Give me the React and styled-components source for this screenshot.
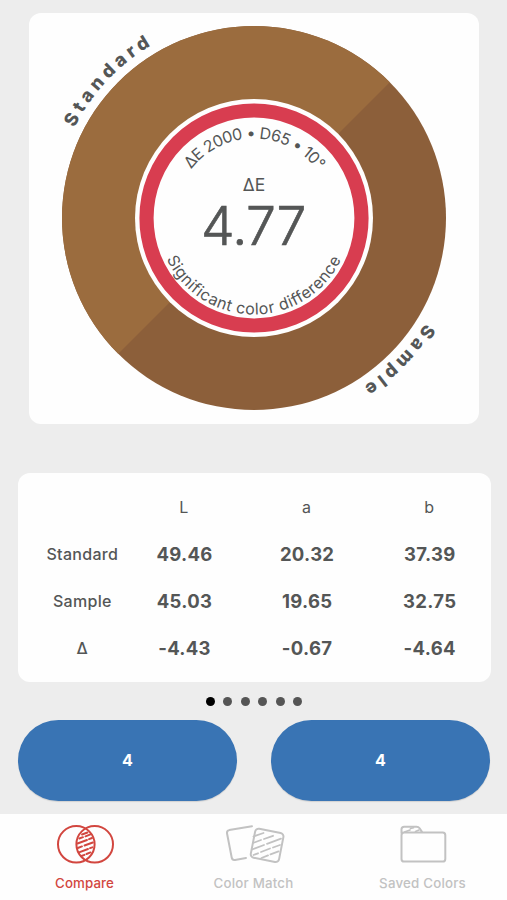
import React, { useState } from "react";
import styled, { createGlobalStyle, css } from "styled-components";

const GlobalStyle = createGlobalStyle`
  * {
    box-sizing: border-box;
  }
  body {
    margin: 0;
    background: #ededed;
    font-family: Inter, "Liberation Sans", sans-serif;
    color: #545656;
  }
`;

const Screen = styled.div`
  display: flex;
  flex-direction: column;
  width: 507px;
  height: 900px;
  background: #ededed;
  overflow: hidden;
`;

const WheelCard = styled.section`
  width: 450px;
  height: 411px;
  margin: 13px 0 0 29px;
  border-radius: 12px;
  background: #fefefe;
`;

const Wheel = styled.svg`
  display: block;
`;

const WheelText = styled.text`
  fill: #545656;
  font-size: ${(props) => props.$size}px;
  font-weight: ${(props) => props.$weight || 400};
  letter-spacing: ${(props) => props.$spacing || 0}px;
  text-anchor: middle;
`;

const BigNumber = styled(WheelText)`
  stroke: #545656;
  stroke-width: 0.7px;
`;

const TableCard = styled.section`
  display: grid;
  grid-template-columns: 1fr repeat(3, 122.6px);
  grid-auto-rows: 47.1px;
  align-items: center;
  justify-items: center;
  width: 473px;
  height: 209.5px;
  margin: 48.5px 0 0 17.5px;
  padding: 10.5px 0 0 24.5px;
  border-radius: 12px;
  background: #fefefe;
`;

const Label = styled.span`
  font-size: 16px;
  font-weight: ${(props) => (props.$light ? 400 : 500)};
  letter-spacing: 0.3px;
`;

const Value = styled.span`
  font-size: 18.5px;
  font-weight: 700;
  letter-spacing: 0.3px;
  margin-left: 1px;
`;

const Dots = styled.div`
  display: flex;
  justify-content: center;
  gap: 8.4px;
  margin: 14.5px 0 0 1px;
`;

const Dot = styled.span`
  width: 9px;
  height: 9px;
  border-radius: 50%;
  background: ${(props) => (props.$active ? "#000000" : "#555555")};
`;

const Buttons = styled.div`
  display: flex;
  gap: 34px;
  margin: 14.5px 17px 0 18px;
`;

const PillButton = styled.button`
  flex: 1;
  height: 80.5px;
  padding: 0;
  border: none;
  border-radius: 41px;
  background: #3974b4;
  box-shadow: 0 1px 1px rgba(0, 0, 0, 0.12);
  color: #ffffff;
  font-family: inherit;
  font-size: 16px;
  font-weight: 700;
`;

const TabBar = styled.nav`
  display: flex;
  height: 86px;
  margin-top: auto;
  background: #fefefe;
`;

const Tab = styled.button`
  flex: 1;
  display: flex;
  flex-direction: column;
  align-items: center;
  gap: 7px;
  padding: 9px 0 0;
  border: none;
  background: none;
  font-family: inherit;
  font-size: 13.3px;
  line-height: 18px;
  font-weight: 500;
  letter-spacing: ${(props) => props.$spacing}px;
  color: #c2c2c2;
  ${(props) =>
    props.$active &&
    css`
      color: #d2463f;
    `}
`;

const TabIcon = styled.svg`
  width: 62px;
  height: 44px;
  fill: none;
  stroke: currentColor;
  stroke-width: 2;
  stroke-linecap: round;
  stroke-linejoin: round;
`;

const rows = [
  { name: "Standard", values: ["49.46", "20.32", "37.39"] },
  { name: "Sample", values: ["45.03", "19.65", "32.75"] },
  { name: "Δ", values: ["-4.43", "-0.67", "-4.64"] },
];

const CX = 225;
const CY = 205;

// arc given by two angles in degrees, measured clockwise from the right
function arc(r, from, to, sweep) {
  const p = (deg) => {
    const a = (deg * Math.PI) / 180;
    return `${CX + r * Math.cos(a)} ${CY + r * Math.sin(a)}`;
  };
  return `M${p(from)} A${r} ${r} 0 0 ${sweep} ${p(to)}`;
}

function ColorWheel() {
  return (
    <Wheel width="450" height="411" viewBox="0 0 450 411">
      <defs>
        <path id="standardArc" d={arc(201, 163.5, 283.5, 1)} />
        <path id="sampleArc" d={arc(201, -15.2, 104.8, 1)} />
        <path id="topArc" d={arc(79.5, 180.5, 360, 1)} />
        <path id="bottomArc" d={arc(96.5, 180, 0.2, 0)} />
      </defs>
      <circle cx={CX} cy={CY} r="192" fill="#8c5f3a" />
      <path d={`${arc(192, 135, 315, 1)} Z`} fill="#9b6c3e" />
      <circle cx={CX} cy={CY} r="119" fill="#fefefe" />
      <circle
        cx={CX}
        cy={CY}
        r="107.5"
        fill="none"
        stroke="#d83d50"
        strokeWidth="14.2"
      />
      <WheelText $size={18.3} $weight={800} $spacing={4.4}>
        <textPath href="#standardArc" startOffset="50%">
          Standard
        </textPath>
      </WheelText>
      <WheelText $size={18.3} $weight={800} $spacing={4.2}>
        <textPath href="#sampleArc" startOffset="50%">
          Sample
        </textPath>
      </WheelText>
      <WheelText $size={16} $spacing={-0.55}>
        <textPath href="#topArc" startOffset="50%">
          ΔE 2000 • D65 • 10°
        </textPath>
      </WheelText>
      <WheelText $size={16} $spacing={0.5}>
        <textPath href="#bottomArc" startOffset="50%">
          Significant color difference
        </textPath>
      </WheelText>
      <WheelText x={CX} y="178" $size={17.5}>
        ΔE
      </WheelText>
      <BigNumber x={CX - 0.5} y="232" $size={53.5} $weight={300} $spacing={-0.5}>
        4.77
      </BigNumber>
    </Wheel>
  );
}

function CompareIcon() {
  return (
    <TabIcon viewBox="0 0 62 44">
      <circle cx="22.3" cy="21.3" r="18.3" />
      <circle cx="40.7" cy="21.3" r="18.3" />
      <g strokeWidth="1.9">
        <path d="M28 11.5L33.5 9.5M25.3 15.5L29 14.2M31.5 13.3L36.5 11.3" />
        <path d="M23.5 20.5L33 17M35 16.2L38 15M23.8 25L28 23.4M30.5 22.5L38.8 19.5" />
        <path d="M25 29.3L34 26M36 25.2L38.4 24.3M27.5 33L30.5 31.8M32.5 31L36.5 29.4" />
      </g>
    </TabIcon>
  );
}

function MatchIcon() {
  return (
    <TabIcon viewBox="0 0 62 44">
      <path d="M29 3.2L6.2 7.1Q3.6 7.7 4 10.3L8.7 34.5Q9.3 37.4 12 36.9L23 35" />
      <rect
        x="29.8"
        y="7.5"
        width="28.8"
        height="29.5"
        rx="3.5"
        transform="rotate(11 43.5 21.8)"
      />
      <g strokeWidth="1.8">
        <path d="M30.5 13.5L40.5 10M30 20L38 17M41 16L50 12.8M29 26.5L41 22M44 20.8L58 15.7" />
        <path d="M30.5 32L35 30.3M38 29L47 25.5M50 24.5L57 22M38.5 35L45 32.4M47.5 31.4L55.5 28.4" />
      </g>
    </TabIcon>
  );
}

function FolderIcon() {
  return (
    <TabIcon viewBox="0 0 62 44">
      <path d="M9.5 10V6.3Q9.5 3.7 12.2 3.7H24.5Q26.5 3.7 27.6 5.3L30.5 9.6H50.7Q53.3 9.6 53.3 12.2V35.9Q53.3 38.5 50.7 38.5H12.2Q9.5 38.5 9.5 35.9V12.3Q9.5 9.6 12.2 9.6H30" />
      <path d="M12.5 9L18 7M18.5 5.5L21.5 4.7M23.5 8.4L27 7" strokeWidth="1.6" />
    </TabIcon>
  );
}

const tabs = [
  { name: "Compare", icon: CompareIcon, spacing: 0.1 },
  { name: "Color Match", icon: MatchIcon, spacing: 0.2 },
  { name: "Saved Colors", icon: FolderIcon, spacing: 0.2 },
];

export default function App() {
  const [tab, setTab] = useState("Compare");

  return (
    <>
      <GlobalStyle />
      <Screen>
        <WheelCard>
          <ColorWheel />
        </WheelCard>
        <TableCard>
          <span />
          <Label $light>L</Label>
          <Label $light>a</Label>
          <Label $light>b</Label>
          {rows.map((row) => (
            <React.Fragment key={row.name}>
              <Label>{row.name}</Label>
              {row.values.map((value) => (
                <Value key={value}>{value}</Value>
              ))}
            </React.Fragment>
          ))}
        </TableCard>
        <Dots>
          {[0, 1, 2, 3, 4, 5].map((i) => (
            <Dot key={i} $active={i === 0} />
          ))}
        </Dots>
        <Buttons>
          <PillButton>4</PillButton>
          <PillButton>4</PillButton>
        </Buttons>
        <TabBar>
          {tabs.map(({ name, icon: Icon, spacing }) => (
            <Tab
              key={name}
              $active={name === tab}
              $spacing={spacing}
              onClick={() => setTab(name)}
            >
              <Icon />
              {name}
            </Tab>
          ))}
        </TabBar>
      </Screen>
    </>
  );
}
